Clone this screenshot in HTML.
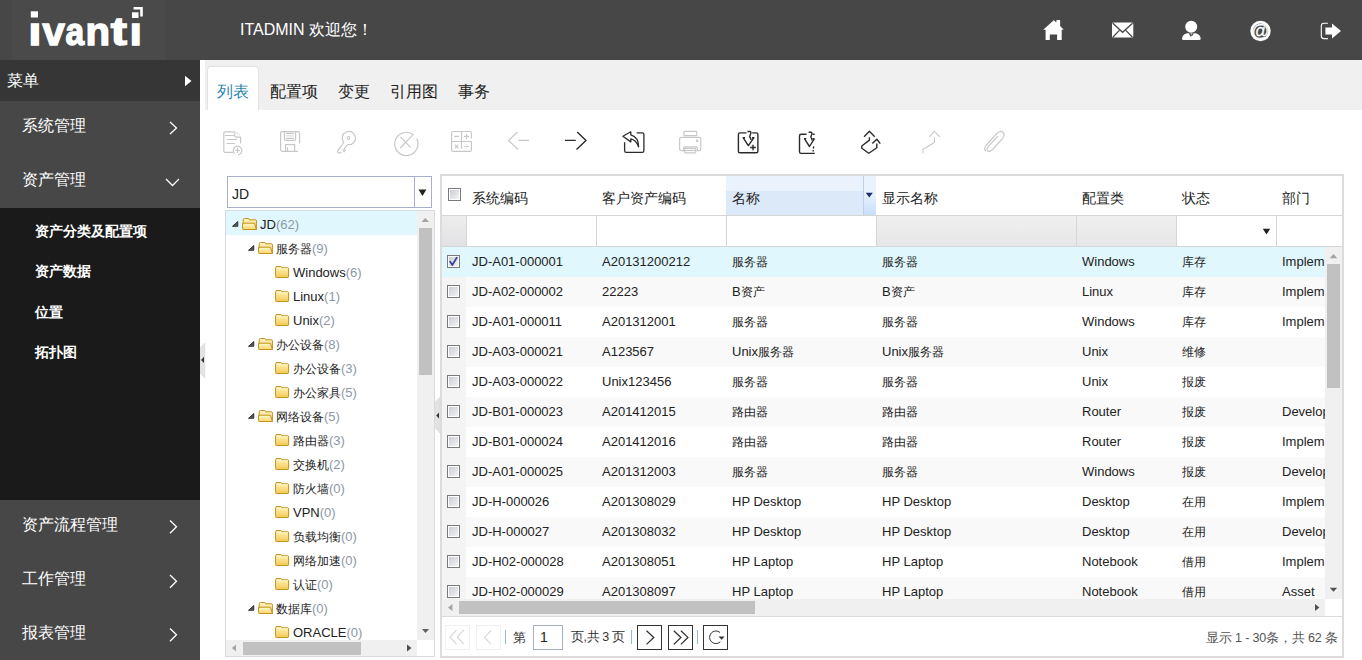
<!DOCTYPE html>
<html><head><meta charset="utf-8">
<style>
*{box-sizing:border-box;margin:0;padding:0}
html,body{width:1362px;height:660px;overflow:hidden;background:#fff;font-family:"Liberation Sans",sans-serif;}
.a{position:absolute;white-space:nowrap}
.mi{color:#fff;font-size:16px}
.si{color:#fff;font-size:14px;font-weight:bold;left:35px}
.tab{font-size:16px;color:#222;top:82px}
.tr{font-size:13px;color:#222;height:24px;line-height:24px}
.tr i{font-style:normal;color:#8d97a5}
.cell{font-size:13px;color:#222;line-height:30px;height:30px;overflow:hidden}
.hd{font-size:14px;color:#222}
.cb{width:13px;height:13px;border:1px solid #7a7a7a;background:linear-gradient(135deg,#c6cad2,#f6f6f8);box-shadow:inset 0 0 0 1px #fff}
.pb{width:25px;height:25px;border:1px solid #333}
</style></head><body>

<div class="a" style="left:0;top:0;width:1362px;height:60px;background:#474747"></div>
<div class="a" style="left:12px;top:0;width:154px;height:60px;background:#494a49"></div>
<svg class="a" style="left:0;top:0" width="200" height="60">
<g fill="#fff" stroke="#fff" stroke-width="1.4" font-family="Liberation Sans" font-weight="bold" font-size="39">
<g transform="translate(28.3,45) scale(1.22,1)"><text x="0" y="0">ı</text></g>
<g transform="translate(42.6,45) scale(1.03,1)"><text x="0" y="0">v</text></g>
<g transform="translate(66.4,45) scale(0.86,1)"><text x="-1" y="0">a</text></g>
<g transform="translate(85.6,45) scale(1.03,1)"><text x="0" y="0">n</text></g>
<g transform="translate(110.8,45) scale(1.25,1)"><text x="0" y="0">t</text></g>
<g transform="translate(129.5,45) scale(1.15,1)"><text x="0" y="0">ı</text></g>
</g>
<g fill="#fff">
<rect x="30.8" y="11.3" width="7.2" height="6.2"/>
<rect x="132" y="12.3" width="6.5" height="5.7"/>
<path d="M133.6 7h9.2v9.4h-2.6v-6.9h-6.6z"/>
</g></svg>
<div class="a" style="left:240px;top:20px;color:#fff;font-size:16px">ITADMIN 欢迎您！</div>
<svg class="a" style="left:1030px;top:10px" width="332" height="40">
<g fill="#fff">
<path d="M13.2 19.8 L23.8 10.3 L26.4 12.6 V9.9 H30.1 V15.9 L33.7 19.8 H31.7 V30.1 H27.1 V24.4 H19.8 V30.1 H15.6 V19.8 Z"/>
<rect x="82" y="12.6" width="21.3" height="14.9" rx="1.5"/>
<circle cx="161.2" cy="16.7" r="6"/>
<path d="M152 29 Q152 24.2 157.2 23.2 H165.5 Q170.7 24.2 170.7 29 Q170.7 30.1 169 30.1 H153.7 Q152 30.1 152 29 Z"/>
<circle cx="230.5" cy="21" r="10.2"/>
<path d="M295.4 17.5 H302 V13.6 L311 21 L302 28.6 V24.5 H295.4 Z"/>
</g>
<g stroke="#474747" stroke-width="1.3" fill="none">
<path d="M82.8 13.2 L92.6 22.3 L102.5 13.2 M83 27 L89.4 20.4 M102.3 27 L95.8 20.4"/>
</g>
<path d="M158.6 23.2 H163.8 L161.2 27.6 Z" fill="#474747"/><path d="M160.4 23.6 H162 L161.2 25 Z M161.2 25.6 L162 26.8 L161.2 28 L160.4 26.8 Z" fill="#fff"/>
<circle cx="230.5" cy="21" r="7.6" fill="#474747"/>
<text x="230.5" y="26.6" font-family="Liberation Sans" font-size="17.5" fill="#fff" stroke="#fff" stroke-width="0.3" text-anchor="middle">@</text>
<path d="M297.9 13.2 H294 Q291.3 13.2 291.3 16 V26 Q291.3 28.6 294 28.6 H297.9" stroke="#fff" stroke-width="1.1" fill="none"/>
</svg>
<div class="a" style="left:0;top:60px;width:200px;height:600px;background:#474747"></div>
<div class="a" style="left:0;top:60px;width:200px;height:41px;background:#363636"></div>
<div class="a mi" style="left:7px;top:71px">菜单</div>
<div class="a mi" style="left:22px;top:116px">系统管理</div>
<div class="a mi" style="left:22px;top:170px">资产管理</div>
<div class="a" style="left:0;top:208px;width:200px;height:292px;background:#1a1a1a"></div>
<div class="a si" style="top:223px">资产分类及配置项</div>
<div class="a si" style="top:263px">资产数据</div>
<div class="a si" style="top:304px">位置</div>
<div class="a si" style="top:344px">拓扑图</div>
<div class="a mi" style="left:22px;top:515px">资产流程管理</div>
<div class="a mi" style="left:22px;top:569px">工作管理</div>
<div class="a mi" style="left:22px;top:623px">报表管理</div>
<svg class="a" style="left:0;top:60px" width="200" height="600">
<path d="M185 15.8 L191.5 21 L185 26.2 Z" fill="#fff"/>
<g stroke="#fff" stroke-width="1.3" fill="none">
<path d="M170 62 L176.5 68 L170 74"/>
<path d="M166 119 L172.5 125.5 L179 119"/>
<path d="M170 460.5 L176.5 466.8 L170 473.3"/>
<path d="M170 515 L176.5 521.3 L170 527.8"/>
<path d="M170 568.5 L176.5 574.8 L170 581.3"/>
</g></svg>
<div class="a" style="left:205px;top:60px;width:1157px;height:50px;background:#f0f0f0"></div>
<div class="a" style="left:207px;top:66px;width:52px;height:44px;background:#fff;border:1px solid #e2e2e2;border-bottom:none;border-radius:4px 4px 0 0"></div>
<div class="a tab" style="left:217px;color:#2a86b0">列表</div>
<div class="a tab" style="left:270px">配置项</div>
<div class="a tab" style="left:338px">变更</div>
<div class="a tab" style="left:390px">引用图</div>
<div class="a tab" style="left:458px">事务</div><svg class="a" style="left:200px;top:110px" width="1162" height="65">
<g transform="translate(-200,-110)" fill="none" stroke-linecap="butt" stroke-linejoin="round">
<!-- doc add -->
<g stroke="#c8c8c8" stroke-width="1.2">
<path d="M234.8 131.8 H225.2 Q223.8 131.8 223.8 133.2 V151 Q223.8 152.4 225.2 152.4 H233.5"/>
<path d="M234.8 131.8 V135.5 Q234.8 137.2 236.5 137.2 H240.6 V143.5"/>
<path d="M236.5 132.2 L239.8 135.5" stroke-dasharray="1 0.6"/>
<path d="M225 135.5 H234.3 M226.8 139.5 H237 M226.8 143.5 H235"/>
<path d="M234.5 153.5 A4.3 4.3 0 1 1 238 154.8"/>
<path d="M237.5 148 V153 M235 150.5 H240"/>
</g>
<!-- floppy -->
<g stroke="#c8c8c8" stroke-width="1.2">
<path d="M299.6 143.5 V133.3 Q299.6 131.6 297.9 131.6 H282.3 Q280.6 131.6 280.6 133.3 V149.6 Q280.6 151.3 282.3 151.3 H298"/>
<path d="M284.5 131.6 V139.2 Q284.5 140.4 285.7 140.4 H294.4 Q295.6 140.4 295.6 139.2 V131.6"/>
<path d="M286 133.4 H294 M286 138.4 H294"/>
<path d="M286 135.9 H294" stroke="#dedede"/>
<path d="M285.5 151.3 V144.6 H294.7 V151.3 M287.5 147.2 V151.3"/>
</g>
<!-- key -->
<g stroke="#c8c8c8" stroke-width="1.2">
<path d="M344 142.5 A6.6 6.6 0 1 1 347.5 144.5"/>
<ellipse cx="348.5" cy="138" rx="1.2" ry="1.5"/>
<path d="M344 142.5 L337.8 150.3 Q336.8 152.3 338.8 153 Q340 153.2 341.5 152.2"/>
<path d="M347.5 144.5 L343.5 149.8 M343.5 149 L345.8 150.8 M342.8 150.4 L344.8 152"/>
</g>
<!-- circle x -->
<g stroke="#c8c8c8" stroke-width="1.2">
<path d="M412.8 134.3 A11.6 11.6 0 1 0 416.6 138.5"/>
<path d="M400.4 136.8 L410.6 147.4 M413.6 134.2 L400.2 148"/>
</g>
<!-- calculator -->
<g stroke="#c8c8c8" stroke-width="1.2">
<path d="M471.4 138.6 V133 Q471.4 131.5 469.9 131.5 H453.1 Q451.6 131.5 451.6 133 V149.9 Q451.6 151.4 453.1 151.4 H469.9 Q471.4 151.4 471.4 149.9 V141.5 H451.6"/>
<path d="M461.5 131.5 V148.8"/>
<path d="M454.2 136.4 H458.9 M464 136.4 H469 M466.5 133.9 V138.9 M454.8 144.7 L458.4 148.3 M458.4 144.7 L454.8 148.3 M464.2 146.5 H469"/>
<path d="M466.5 144.5 v0.5 M466.5 148 v0.5" stroke-width="1.4"/>
</g>
<!-- left arrow -->
<g stroke="#c8c8c8" stroke-width="1.1">
<path d="M517.4 132 L508.6 140.5 L518 149.5 M518.2 140.4 H529"/>
</g>
<!-- right arrow -->
<g stroke="#2b2b2b" stroke-width="1.4">
<path d="M577.2 132.1 L586 140.4 L576.5 149.5 M564.9 140.4 H575.8"/>
</g>
<!-- reply box -->
<g stroke="#2b2b2b" stroke-width="1.3">
<path d="M624.6 142.2 V150.8 Q624.6 152.4 626.2 152.4 H642.3 Q643.9 152.4 643.9 150.8 V134.5 Q643.9 132.9 642.3 132.9 H636.7"/>
<path d="M638.6 146.8 Q638.8 137.3 630.8 134.8 V131.8 L622.9 136.2 L630.8 141.9 V138.9 Q636 139.8 638.6 146.8 Z"/>
</g>
<!-- printer -->
<g stroke="#c8c8c8" stroke-width="1.2">
<rect x="683.8" y="131.4" width="13" height="4.3" rx="0.8"/>
<path d="M684 150.6 H681.2 Q679.6 150.6 679.6 149 V139 Q679.6 137.4 681.2 137.4 H699.2 Q700.8 137.4 700.8 139 V149 Q700.8 150.6 699.2 150.6 H697.4 V148 Q697.4 146.8 696.2 146.8 H684.8 Q683.6 146.8 683.6 148 Z"/>
<rect x="684.6" y="148.4" width="11.2" height="4.4" rx="0.8"/>
<path d="M685 150.5 H695.4"/>
<circle cx="697.1" cy="140.9" r="0.7"/>
</g>
<!-- download + -->
<g stroke="#2b2b2b" stroke-width="1.4">
<path d="M746.5 132.9 H740 Q738.4 132.9 738.4 134.5 V151.2 Q738.4 152.8 740 152.8 H756.3 Q757.9 152.8 757.9 151.2 V134.5 Q757.9 132.9 756.3 132.9 H752.2"/>
<path d="M743.1 137.6 L748.3 145.6 L754 137.6 M742.7 137.8 H745 M752 137.8 H754.4"/>
<path d="M747.5 131.5 H750 Q751.4 131.8 750.6 134 L749.6 136.5 Q751 138.5 751 140"/>
<path d="M750.2 147.5 H755.8 M753 144.8 V150.3"/>
</g>
<!-- download clipped -->
<g stroke="#2b2b2b" stroke-width="1.4">
<path d="M806.5 134.3 H801.2 Q799.5 134.3 799.5 136 V151.7 Q799.5 153.4 801.2 153.4 H814.8"/>
<path d="M812.5 134.3 H814.8"/>
<path d="M804.4 138.6 L809.5 146.5 L814.4 138.6 M804 138.8 H806.2 M812.4 138.8 H814.6"/>
<path d="M808.6 132.2 H811 Q812.5 132.4 811.6 134.6 L810.8 137 Q812 139 812 140.5"/>
<path d="M813.8 146.5 L813.3 148.5 M813.4 150 L812.9 151.5"/>
</g>
<!-- route -->
<g stroke="#2b2b2b" stroke-width="1.4">
<path d="M864.1 136.8 L869.4 131.3 L874.7 136.8"/>
<path d="M869.4 137.2 V140.1 L861.8 146 V148.3 L868.8 153.3 L876.8 147.7 V143.6"/>
<path d="M872.3 143.6 L876.8 139.2 L880.3 143.6"/>
</g>
<!-- step arrow -->
<g stroke="#c8c8c8" stroke-width="1.1">
<path d="M929.3 136.8 L934.4 131.3 L939.9 136.8"/>
<path d="M934.4 137.2 V142.5 L922.9 149.5 V153.6"/>
</g>
<!-- paperclip -->
<g stroke="#c8c8c8" stroke-width="1.2">
<path d="M985.6 151.2 Q983.5 148.8 986 145.5 L996.5 133.8 Q1000.5 129.8 1003.2 132.5 Q1005.5 135.2 1002 139.2 L992.5 149.5 Q989.5 152.5 987.6 150.7 Q986 148.8 988.8 145.8 L997.8 136.2"/>
</g>
</g></svg><div class="a" style="left:227px;top:176px;width:205px;height:32px;border:1px solid #a9afc9;background:#fff"></div>
<div class="a" style="left:414px;top:177px;width:1px;height:30px;background:#a9afc9"></div>
<svg class="a" style="left:418px;top:189px" width="9" height="8"><path d="M0.5 0.6 H8.4 L4.45 7 Z" fill="#222"/></svg>
<div class="a" style="left:232px;top:186px;font-size:14px;color:#222">JD</div>
<div class="a" style="left:225px;top:210px;width:210px;height:447px;border:1px solid #d8dae2;background:#fff"></div>
<div class="a" style="left:226px;top:211px;width:191px;height:24px;background:#e0f8fd"></div>
<div class="a" style="left:417px;top:211px;width:17px;height:429px;background:#f0f0f0"></div>
<div class="a" style="left:419px;top:228px;width:13px;height:147px;background:#c1c1c1"></div>
<svg class="a" style="left:417px;top:211px" width="17" height="429"><path d="M4.5 11 H12 L8.25 7 Z" fill="#a3a3a3"/><path d="M5 418 H12 L8.5 422 Z" fill="#606060"/></svg>
<div class="a" style="left:226px;top:640px;width:191px;height:16px;background:#f0f0f0"></div>
<div class="a" style="left:243px;top:642px;width:118px;height:13px;background:#c1c1c1"></div>
<svg class="a" style="left:226px;top:640px" width="191" height="16"><path d="M10 4.5 V11.5 L6 8 Z" fill="#a3a3a3"/><path d="M181 4.5 V11.5 L185.5 8 Z" fill="#505050"/></svg>
<div class="a tr" style="left:260px;top:213px">JD<i>(62)</i></div>
<div class="a tr" style="left:276px;top:237px"><span style="font-size:12.3px">服务器</span><i>(9)</i></div>
<div class="a tr" style="left:293px;top:261px">Windows<i>(6)</i></div>
<div class="a tr" style="left:293px;top:285px">Linux<i>(1)</i></div>
<div class="a tr" style="left:293px;top:309px">Unix<i>(2)</i></div>
<div class="a tr" style="left:276px;top:333px"><span style="font-size:12.3px">办公设备</span><i>(8)</i></div>
<div class="a tr" style="left:293px;top:357px"><span style="font-size:12.3px">办公设备</span><i>(3)</i></div>
<div class="a tr" style="left:293px;top:381px"><span style="font-size:12.3px">办公家具</span><i>(5)</i></div>
<div class="a tr" style="left:276px;top:405px"><span style="font-size:12.3px">网络设备</span><i>(5)</i></div>
<div class="a tr" style="left:293px;top:429px"><span style="font-size:12.3px">路由器</span><i>(3)</i></div>
<div class="a tr" style="left:293px;top:453px"><span style="font-size:12.3px">交换机</span><i>(2)</i></div>
<div class="a tr" style="left:293px;top:477px"><span style="font-size:12.3px">防火墙</span><i>(0)</i></div>
<div class="a tr" style="left:293px;top:501px">VPN<i>(0)</i></div>
<div class="a tr" style="left:293px;top:525px"><span style="font-size:12.3px">负载均衡</span><i>(0)</i></div>
<div class="a tr" style="left:293px;top:549px"><span style="font-size:12.3px">网络加速</span><i>(0)</i></div>
<div class="a tr" style="left:293px;top:573px"><span style="font-size:12.3px">认证</span><i>(0)</i></div>
<div class="a tr" style="left:276px;top:597px"><span style="font-size:12.3px">数据库</span><i>(0)</i></div>
<div class="a tr" style="left:293px;top:621px">ORACLE<i>(0)</i></div>
<svg class="a" style="left:0;top:0" width="440" height="660"><defs><linearGradient id="fb" x1="0" y1="0" x2="0" y2="1"><stop offset="0" stop-color="#fff7c2"/><stop offset="1" stop-color="#f3d060"/></linearGradient><linearGradient id="ff" x1="0" y1="0" x2="0" y2="1"><stop offset="0" stop-color="#fff9cf"/><stop offset="1" stop-color="#f6d76a"/></linearGradient><linearGradient id="fc" x1="0" y1="0" x2="0" y2="1"><stop offset="0" stop-color="#fff6bc"/><stop offset="1" stop-color="#f1cb52"/></linearGradient></defs><path d="M232.5 226.3 H237.8 V221.5 Z" fill="#555" stroke="#2e2e2e" stroke-width="0.9" stroke-linejoin="round"/><g transform="translate(242,218)">
<path d="M1.2 2.2 Q1.2 0.5 2.6 0.5 H6.2 Q7.3 0.5 7.6 1.8 H13.6 Q14.4 1.8 14.4 2.6 V11.5 H1.2 Z" fill="url(#fb)" stroke="#c3901f" stroke-width="1"/>
<path d="M0.6 5.2 H12.4 L14.4 11.5 H1.6 Q0.6 11.5 0.6 10.5 Z" fill="url(#ff)" stroke="#c3901f" stroke-width="1" stroke-linejoin="round"/>
</g><path d="M248.5 250.3 H253.8 V245.5 Z" fill="#555" stroke="#2e2e2e" stroke-width="0.9" stroke-linejoin="round"/><g transform="translate(258,242)">
<path d="M1.2 2.2 Q1.2 0.5 2.6 0.5 H6.2 Q7.3 0.5 7.6 1.8 H13.6 Q14.4 1.8 14.4 2.6 V11.5 H1.2 Z" fill="url(#fb)" stroke="#c3901f" stroke-width="1"/>
<path d="M0.6 5.2 H12.4 L14.4 11.5 H1.6 Q0.6 11.5 0.6 10.5 Z" fill="url(#ff)" stroke="#c3901f" stroke-width="1" stroke-linejoin="round"/>
</g><g transform="translate(275,266)">
<path d="M0.6 1.8 Q0.6 0.5 1.9 0.5 H5.5 Q6.6 0.5 6.9 1.8 H12.8 Q13.6 1.8 13.6 2.6 V10.7 Q13.6 11.5 12.8 11.5 H1.4 Q0.6 11.5 0.6 10.7 Z" fill="url(#fc)" stroke="#c3901f" stroke-width="1"/>
<path d="M1.2 2.8 H13" stroke="#fff8d0" stroke-width="0.8"/>
</g><g transform="translate(275,290)">
<path d="M0.6 1.8 Q0.6 0.5 1.9 0.5 H5.5 Q6.6 0.5 6.9 1.8 H12.8 Q13.6 1.8 13.6 2.6 V10.7 Q13.6 11.5 12.8 11.5 H1.4 Q0.6 11.5 0.6 10.7 Z" fill="url(#fc)" stroke="#c3901f" stroke-width="1"/>
<path d="M1.2 2.8 H13" stroke="#fff8d0" stroke-width="0.8"/>
</g><g transform="translate(275,314)">
<path d="M0.6 1.8 Q0.6 0.5 1.9 0.5 H5.5 Q6.6 0.5 6.9 1.8 H12.8 Q13.6 1.8 13.6 2.6 V10.7 Q13.6 11.5 12.8 11.5 H1.4 Q0.6 11.5 0.6 10.7 Z" fill="url(#fc)" stroke="#c3901f" stroke-width="1"/>
<path d="M1.2 2.8 H13" stroke="#fff8d0" stroke-width="0.8"/>
</g><path d="M248.5 346.3 H253.8 V341.5 Z" fill="#555" stroke="#2e2e2e" stroke-width="0.9" stroke-linejoin="round"/><g transform="translate(258,338)">
<path d="M1.2 2.2 Q1.2 0.5 2.6 0.5 H6.2 Q7.3 0.5 7.6 1.8 H13.6 Q14.4 1.8 14.4 2.6 V11.5 H1.2 Z" fill="url(#fb)" stroke="#c3901f" stroke-width="1"/>
<path d="M0.6 5.2 H12.4 L14.4 11.5 H1.6 Q0.6 11.5 0.6 10.5 Z" fill="url(#ff)" stroke="#c3901f" stroke-width="1" stroke-linejoin="round"/>
</g><g transform="translate(275,362)">
<path d="M0.6 1.8 Q0.6 0.5 1.9 0.5 H5.5 Q6.6 0.5 6.9 1.8 H12.8 Q13.6 1.8 13.6 2.6 V10.7 Q13.6 11.5 12.8 11.5 H1.4 Q0.6 11.5 0.6 10.7 Z" fill="url(#fc)" stroke="#c3901f" stroke-width="1"/>
<path d="M1.2 2.8 H13" stroke="#fff8d0" stroke-width="0.8"/>
</g><g transform="translate(275,386)">
<path d="M0.6 1.8 Q0.6 0.5 1.9 0.5 H5.5 Q6.6 0.5 6.9 1.8 H12.8 Q13.6 1.8 13.6 2.6 V10.7 Q13.6 11.5 12.8 11.5 H1.4 Q0.6 11.5 0.6 10.7 Z" fill="url(#fc)" stroke="#c3901f" stroke-width="1"/>
<path d="M1.2 2.8 H13" stroke="#fff8d0" stroke-width="0.8"/>
</g><path d="M248.5 418.3 H253.8 V413.5 Z" fill="#555" stroke="#2e2e2e" stroke-width="0.9" stroke-linejoin="round"/><g transform="translate(258,410)">
<path d="M1.2 2.2 Q1.2 0.5 2.6 0.5 H6.2 Q7.3 0.5 7.6 1.8 H13.6 Q14.4 1.8 14.4 2.6 V11.5 H1.2 Z" fill="url(#fb)" stroke="#c3901f" stroke-width="1"/>
<path d="M0.6 5.2 H12.4 L14.4 11.5 H1.6 Q0.6 11.5 0.6 10.5 Z" fill="url(#ff)" stroke="#c3901f" stroke-width="1" stroke-linejoin="round"/>
</g><g transform="translate(275,434)">
<path d="M0.6 1.8 Q0.6 0.5 1.9 0.5 H5.5 Q6.6 0.5 6.9 1.8 H12.8 Q13.6 1.8 13.6 2.6 V10.7 Q13.6 11.5 12.8 11.5 H1.4 Q0.6 11.5 0.6 10.7 Z" fill="url(#fc)" stroke="#c3901f" stroke-width="1"/>
<path d="M1.2 2.8 H13" stroke="#fff8d0" stroke-width="0.8"/>
</g><g transform="translate(275,458)">
<path d="M0.6 1.8 Q0.6 0.5 1.9 0.5 H5.5 Q6.6 0.5 6.9 1.8 H12.8 Q13.6 1.8 13.6 2.6 V10.7 Q13.6 11.5 12.8 11.5 H1.4 Q0.6 11.5 0.6 10.7 Z" fill="url(#fc)" stroke="#c3901f" stroke-width="1"/>
<path d="M1.2 2.8 H13" stroke="#fff8d0" stroke-width="0.8"/>
</g><g transform="translate(275,482)">
<path d="M0.6 1.8 Q0.6 0.5 1.9 0.5 H5.5 Q6.6 0.5 6.9 1.8 H12.8 Q13.6 1.8 13.6 2.6 V10.7 Q13.6 11.5 12.8 11.5 H1.4 Q0.6 11.5 0.6 10.7 Z" fill="url(#fc)" stroke="#c3901f" stroke-width="1"/>
<path d="M1.2 2.8 H13" stroke="#fff8d0" stroke-width="0.8"/>
</g><g transform="translate(275,506)">
<path d="M0.6 1.8 Q0.6 0.5 1.9 0.5 H5.5 Q6.6 0.5 6.9 1.8 H12.8 Q13.6 1.8 13.6 2.6 V10.7 Q13.6 11.5 12.8 11.5 H1.4 Q0.6 11.5 0.6 10.7 Z" fill="url(#fc)" stroke="#c3901f" stroke-width="1"/>
<path d="M1.2 2.8 H13" stroke="#fff8d0" stroke-width="0.8"/>
</g><g transform="translate(275,530)">
<path d="M0.6 1.8 Q0.6 0.5 1.9 0.5 H5.5 Q6.6 0.5 6.9 1.8 H12.8 Q13.6 1.8 13.6 2.6 V10.7 Q13.6 11.5 12.8 11.5 H1.4 Q0.6 11.5 0.6 10.7 Z" fill="url(#fc)" stroke="#c3901f" stroke-width="1"/>
<path d="M1.2 2.8 H13" stroke="#fff8d0" stroke-width="0.8"/>
</g><g transform="translate(275,554)">
<path d="M0.6 1.8 Q0.6 0.5 1.9 0.5 H5.5 Q6.6 0.5 6.9 1.8 H12.8 Q13.6 1.8 13.6 2.6 V10.7 Q13.6 11.5 12.8 11.5 H1.4 Q0.6 11.5 0.6 10.7 Z" fill="url(#fc)" stroke="#c3901f" stroke-width="1"/>
<path d="M1.2 2.8 H13" stroke="#fff8d0" stroke-width="0.8"/>
</g><g transform="translate(275,578)">
<path d="M0.6 1.8 Q0.6 0.5 1.9 0.5 H5.5 Q6.6 0.5 6.9 1.8 H12.8 Q13.6 1.8 13.6 2.6 V10.7 Q13.6 11.5 12.8 11.5 H1.4 Q0.6 11.5 0.6 10.7 Z" fill="url(#fc)" stroke="#c3901f" stroke-width="1"/>
<path d="M1.2 2.8 H13" stroke="#fff8d0" stroke-width="0.8"/>
</g><path d="M248.5 610.3 H253.8 V605.5 Z" fill="#555" stroke="#2e2e2e" stroke-width="0.9" stroke-linejoin="round"/><g transform="translate(258,602)">
<path d="M1.2 2.2 Q1.2 0.5 2.6 0.5 H6.2 Q7.3 0.5 7.6 1.8 H13.6 Q14.4 1.8 14.4 2.6 V11.5 H1.2 Z" fill="url(#fb)" stroke="#c3901f" stroke-width="1"/>
<path d="M0.6 5.2 H12.4 L14.4 11.5 H1.6 Q0.6 11.5 0.6 10.5 Z" fill="url(#ff)" stroke="#c3901f" stroke-width="1" stroke-linejoin="round"/>
</g><g transform="translate(275,626)">
<path d="M0.6 1.8 Q0.6 0.5 1.9 0.5 H5.5 Q6.6 0.5 6.9 1.8 H12.8 Q13.6 1.8 13.6 2.6 V10.7 Q13.6 11.5 12.8 11.5 H1.4 Q0.6 11.5 0.6 10.7 Z" fill="url(#fc)" stroke="#c3901f" stroke-width="1"/>
<path d="M1.2 2.8 H13" stroke="#fff8d0" stroke-width="0.8"/>
</g></svg>
<svg class="a" style="left:200px;top:343px" width="6" height="35"><path d="M0.3 4.5 V30.5 L4.8 35 V0 Z" fill="#e3e3e3" stroke="#d0d0d0" stroke-width="0.5"/><path d="M4 13.8 V20 L1 16.9 Z" fill="#333"/></svg>
<svg class="a" style="left:435px;top:397px" width="6" height="36"><path d="M0.3 5 V31 L5 36 V0 Z" fill="#e3e3e3" stroke="#d0d0d0" stroke-width="0.5"/><path d="M4 15.5 V21.5 L1.2 18.5 Z" fill="#333"/></svg><div class="a" style="left:440px;top:174px;width:904px;height:484px;border:2px solid #dcdcdc;background:#fff"></div>
<div class="a" style="left:726px;top:176px;width:137px;height:15px;background:#eaf3fd"></div>
<div class="a" style="left:726px;top:191px;width:137px;height:24px;background:#dce9f9"></div>
<div class="a" style="left:863px;top:176px;width:13px;height:39px;background:linear-gradient(#eaf3fd,#eaf3fd 40%,#c8defa);border-left:1px solid #bcd0e8"></div>
<svg class="a" style="left:865px;top:192px" width="9" height="7"><path d="M0.8 0.7 H7.8 L4.3 5.6 Z" fill="#1c2f6c"/></svg>
<div class="a" style="left:442px;top:215px;width:900px;height:1px;background:#d6d6d6"></div>
<div class="a hd" style="left:472px;top:190px">系统编码</div>
<div class="a hd" style="left:602px;top:190px">客户资产编码</div>
<div class="a hd" style="left:732px;top:190px">名称</div>
<div class="a hd" style="left:882px;top:190px">显示名称</div>
<div class="a hd" style="left:1082px;top:190px">配置类</div>
<div class="a hd" style="left:1182px;top:190px">状态</div>
<div class="a hd" style="left:1282px;top:190px">部门</div>
<div class="a" style="left:442px;top:216px;width:24px;height:30px;background:linear-gradient(#ededed,#e2e2e4)"></div>
<div class="a" style="left:877px;top:216px;width:299px;height:30px;background:linear-gradient(#f0f0f0,#e6e6e8)"></div>
<div class="a" style="left:466px;top:216px;width:1px;height:30px;background:#d6d6d6"></div>
<div class="a" style="left:596px;top:216px;width:1px;height:30px;background:#d6d6d6"></div>
<div class="a" style="left:726px;top:216px;width:1px;height:30px;background:#d6d6d6"></div>
<div class="a" style="left:876px;top:216px;width:1px;height:30px;background:#d6d6d6"></div>
<div class="a" style="left:1076px;top:216px;width:1px;height:30px;background:#d6d6d6"></div>
<div class="a" style="left:1176px;top:216px;width:1px;height:30px;background:#d6d6d6"></div>
<div class="a" style="left:1276px;top:216px;width:1px;height:30px;background:#d6d6d6"></div>
<div class="a" style="left:442px;top:246px;width:900px;height:1px;background:#d6d6d6"></div>
<svg class="a" style="left:1262px;top:228px" width="9" height="8"><path d="M0.8 0.8 H8.2 L4.5 6.6 Z" fill="#222"/></svg>
<div class="a" style="left:442px;top:247px;width:883px;height:352px;overflow:hidden">
<div class="a" style="left:0;top:0px;width:883px;height:30px;background:#e0f8fd"></div>
<div class="a cb" style="left:5px;top:8px"></div>
<svg class="a" style="left:6px;top:9px" width="11" height="11"><path d="M2.2 5.6 L4.3 9 L8.8 1.6" stroke="#34479a" stroke-width="1.8" fill="none" stroke-linecap="round" stroke-linejoin="round"/></svg>
<div class="a cell" style="left:30px;top:0px;width:124px">JD-A01-000001</div>
<div class="a cell" style="left:160px;top:0px;width:124px">A20131200212</div>
<div class="a cell" style="left:290px;top:0px;width:144px"><span style="font-size:12.2px">服务器</span></div>
<div class="a cell" style="left:440px;top:0px;width:194px"><span style="font-size:12.2px">服务器</span></div>
<div class="a cell" style="left:640px;top:0px;width:94px">Windows</div>
<div class="a cell" style="left:740px;top:0px;width:94px"><span style="font-size:12.2px">库存</span></div>
<div class="a cell" style="left:840px;top:0px;width:43px">Implem</div>
<div class="a" style="left:0;top:30px;width:883px;height:30px;background:#f9f9f9"></div>
<div class="a" style="left:0;top:30px;width:24px;height:30px;background:#f4f4f4"></div>
<div class="a cb" style="left:5px;top:38px"></div>
<div class="a cell" style="left:30px;top:30px;width:124px">JD-A02-000002</div>
<div class="a cell" style="left:160px;top:30px;width:124px">22223</div>
<div class="a cell" style="left:290px;top:30px;width:144px">B<span style="font-size:12.2px">资产</span></div>
<div class="a cell" style="left:440px;top:30px;width:194px">B<span style="font-size:12.2px">资产</span></div>
<div class="a cell" style="left:640px;top:30px;width:94px">Linux</div>
<div class="a cell" style="left:740px;top:30px;width:94px"><span style="font-size:12.2px">库存</span></div>
<div class="a cell" style="left:840px;top:30px;width:43px">Implem</div>
<div class="a" style="left:0;top:60px;width:883px;height:30px;background:#fff"></div>
<div class="a" style="left:0;top:60px;width:24px;height:30px;background:#f4f4f4"></div>
<div class="a cb" style="left:5px;top:68px"></div>
<div class="a cell" style="left:30px;top:60px;width:124px">JD-A01-000011</div>
<div class="a cell" style="left:160px;top:60px;width:124px">A201312001</div>
<div class="a cell" style="left:290px;top:60px;width:144px"><span style="font-size:12.2px">服务器</span></div>
<div class="a cell" style="left:440px;top:60px;width:194px"><span style="font-size:12.2px">服务器</span></div>
<div class="a cell" style="left:640px;top:60px;width:94px">Windows</div>
<div class="a cell" style="left:740px;top:60px;width:94px"><span style="font-size:12.2px">库存</span></div>
<div class="a cell" style="left:840px;top:60px;width:43px">Implem</div>
<div class="a" style="left:0;top:90px;width:883px;height:30px;background:#f9f9f9"></div>
<div class="a" style="left:0;top:90px;width:24px;height:30px;background:#f4f4f4"></div>
<div class="a cb" style="left:5px;top:98px"></div>
<div class="a cell" style="left:30px;top:90px;width:124px">JD-A03-000021</div>
<div class="a cell" style="left:160px;top:90px;width:124px">A123567</div>
<div class="a cell" style="left:290px;top:90px;width:144px">Unix<span style="font-size:12.2px">服务器</span></div>
<div class="a cell" style="left:440px;top:90px;width:194px">Unix<span style="font-size:12.2px">服务器</span></div>
<div class="a cell" style="left:640px;top:90px;width:94px">Unix</div>
<div class="a cell" style="left:740px;top:90px;width:94px"><span style="font-size:12.2px">维修</span></div>
<div class="a cell" style="left:840px;top:90px;width:43px"></div>
<div class="a" style="left:0;top:120px;width:883px;height:30px;background:#fff"></div>
<div class="a" style="left:0;top:120px;width:24px;height:30px;background:#f4f4f4"></div>
<div class="a cb" style="left:5px;top:128px"></div>
<div class="a cell" style="left:30px;top:120px;width:124px">JD-A03-000022</div>
<div class="a cell" style="left:160px;top:120px;width:124px">Unix123456</div>
<div class="a cell" style="left:290px;top:120px;width:144px"><span style="font-size:12.2px">服务器</span></div>
<div class="a cell" style="left:440px;top:120px;width:194px"><span style="font-size:12.2px">服务器</span></div>
<div class="a cell" style="left:640px;top:120px;width:94px">Unix</div>
<div class="a cell" style="left:740px;top:120px;width:94px"><span style="font-size:12.2px">报废</span></div>
<div class="a cell" style="left:840px;top:120px;width:43px"></div>
<div class="a" style="left:0;top:150px;width:883px;height:30px;background:#f9f9f9"></div>
<div class="a" style="left:0;top:150px;width:24px;height:30px;background:#f4f4f4"></div>
<div class="a cb" style="left:5px;top:158px"></div>
<div class="a cell" style="left:30px;top:150px;width:124px">JD-B01-000023</div>
<div class="a cell" style="left:160px;top:150px;width:124px">A201412015</div>
<div class="a cell" style="left:290px;top:150px;width:144px"><span style="font-size:12.2px">路由器</span></div>
<div class="a cell" style="left:440px;top:150px;width:194px"><span style="font-size:12.2px">路由器</span></div>
<div class="a cell" style="left:640px;top:150px;width:94px">Router</div>
<div class="a cell" style="left:740px;top:150px;width:94px"><span style="font-size:12.2px">报废</span></div>
<div class="a cell" style="left:840px;top:150px;width:43px">Develop</div>
<div class="a" style="left:0;top:180px;width:883px;height:30px;background:#fff"></div>
<div class="a" style="left:0;top:180px;width:24px;height:30px;background:#f4f4f4"></div>
<div class="a cb" style="left:5px;top:188px"></div>
<div class="a cell" style="left:30px;top:180px;width:124px">JD-B01-000024</div>
<div class="a cell" style="left:160px;top:180px;width:124px">A201412016</div>
<div class="a cell" style="left:290px;top:180px;width:144px"><span style="font-size:12.2px">路由器</span></div>
<div class="a cell" style="left:440px;top:180px;width:194px"><span style="font-size:12.2px">路由器</span></div>
<div class="a cell" style="left:640px;top:180px;width:94px">Router</div>
<div class="a cell" style="left:740px;top:180px;width:94px"><span style="font-size:12.2px">报废</span></div>
<div class="a cell" style="left:840px;top:180px;width:43px">Implem</div>
<div class="a" style="left:0;top:210px;width:883px;height:30px;background:#f9f9f9"></div>
<div class="a" style="left:0;top:210px;width:24px;height:30px;background:#f4f4f4"></div>
<div class="a cb" style="left:5px;top:218px"></div>
<div class="a cell" style="left:30px;top:210px;width:124px">JD-A01-000025</div>
<div class="a cell" style="left:160px;top:210px;width:124px">A201312003</div>
<div class="a cell" style="left:290px;top:210px;width:144px"><span style="font-size:12.2px">服务器</span></div>
<div class="a cell" style="left:440px;top:210px;width:194px"><span style="font-size:12.2px">服务器</span></div>
<div class="a cell" style="left:640px;top:210px;width:94px">Windows</div>
<div class="a cell" style="left:740px;top:210px;width:94px"><span style="font-size:12.2px">报废</span></div>
<div class="a cell" style="left:840px;top:210px;width:43px">Develop</div>
<div class="a" style="left:0;top:240px;width:883px;height:30px;background:#fff"></div>
<div class="a" style="left:0;top:240px;width:24px;height:30px;background:#f4f4f4"></div>
<div class="a cb" style="left:5px;top:248px"></div>
<div class="a cell" style="left:30px;top:240px;width:124px">JD-H-000026</div>
<div class="a cell" style="left:160px;top:240px;width:124px">A201308029</div>
<div class="a cell" style="left:290px;top:240px;width:144px">HP Desktop</div>
<div class="a cell" style="left:440px;top:240px;width:194px">HP Desktop</div>
<div class="a cell" style="left:640px;top:240px;width:94px">Desktop</div>
<div class="a cell" style="left:740px;top:240px;width:94px"><span style="font-size:12.2px">在用</span></div>
<div class="a cell" style="left:840px;top:240px;width:43px">Implem</div>
<div class="a" style="left:0;top:270px;width:883px;height:30px;background:#f9f9f9"></div>
<div class="a" style="left:0;top:270px;width:24px;height:30px;background:#f4f4f4"></div>
<div class="a cb" style="left:5px;top:278px"></div>
<div class="a cell" style="left:30px;top:270px;width:124px">JD-H-000027</div>
<div class="a cell" style="left:160px;top:270px;width:124px">A201308032</div>
<div class="a cell" style="left:290px;top:270px;width:144px">HP Desktop</div>
<div class="a cell" style="left:440px;top:270px;width:194px">HP Desktop</div>
<div class="a cell" style="left:640px;top:270px;width:94px">Desktop</div>
<div class="a cell" style="left:740px;top:270px;width:94px"><span style="font-size:12.2px">在用</span></div>
<div class="a cell" style="left:840px;top:270px;width:43px">Develop</div>
<div class="a" style="left:0;top:300px;width:883px;height:30px;background:#fff"></div>
<div class="a" style="left:0;top:300px;width:24px;height:30px;background:#f4f4f4"></div>
<div class="a cb" style="left:5px;top:308px"></div>
<div class="a cell" style="left:30px;top:300px;width:124px">JD-H02-000028</div>
<div class="a cell" style="left:160px;top:300px;width:124px">A201308051</div>
<div class="a cell" style="left:290px;top:300px;width:144px">HP Laptop</div>
<div class="a cell" style="left:440px;top:300px;width:194px">HP Laptop</div>
<div class="a cell" style="left:640px;top:300px;width:94px">Notebook</div>
<div class="a cell" style="left:740px;top:300px;width:94px"><span style="font-size:12.2px">借用</span></div>
<div class="a cell" style="left:840px;top:300px;width:43px">Implem</div>
<div class="a" style="left:0;top:330px;width:883px;height:30px;background:#f9f9f9"></div>
<div class="a" style="left:0;top:330px;width:24px;height:30px;background:#f4f4f4"></div>
<div class="a cb" style="left:5px;top:338px"></div>
<div class="a cell" style="left:30px;top:330px;width:124px">JD-H02-000029</div>
<div class="a cell" style="left:160px;top:330px;width:124px">A201308097</div>
<div class="a cell" style="left:290px;top:330px;width:144px">HP Laptop</div>
<div class="a cell" style="left:440px;top:330px;width:194px">HP Laptop</div>
<div class="a cell" style="left:640px;top:330px;width:94px">Notebook</div>
<div class="a cell" style="left:740px;top:330px;width:94px"><span style="font-size:12.2px">借用</span></div>
<div class="a cell" style="left:840px;top:330px;width:43px">Asset</div>
</div>
<div class="a cb" style="left:448px;top:188px"></div>
<div class="a" style="left:1325px;top:247px;width:17px;height:352px;background:#f0f0f0"></div>
<div class="a" style="left:1327px;top:264px;width:13px;height:124px;background:#c1c1c1"></div>
<svg class="a" style="left:1325px;top:247px" width="17" height="352"><path d="M4.8 11.2 H12.2 L8.5 7 Z" fill="#a3a3a3"/><path d="M4.8 340.8 H12.2 L8.5 344.8 Z" fill="#505050"/></svg>
<div class="a" style="left:442px;top:599px;width:883px;height:17px;background:#f0f0f0"></div>
<div class="a" style="left:459px;top:601px;width:296px;height:13px;background:#c1c1c1"></div>
<svg class="a" style="left:442px;top:599px" width="883" height="17"><path d="M10.4 5 V12 L6 8.5 Z" fill="#a3a3a3"/><path d="M873 5 V12 L877.4 8.5 Z" fill="#505050"/></svg>
<div class="a" style="left:442px;top:616px;width:900px;height:1px;background:#dcdcdc"></div>
<div class="a pb" style="left:445px;top:625px;border-color:#f0f0f0"></div>
<div class="a pb" style="left:476px;top:625px;border-color:#f0f0f0"></div>
<div class="a" style="left:505px;top:630px;width:1px;height:14px;background:#8cb8ea"></div>
<div class="a" style="left:631px;top:630px;width:1px;height:14px;background:#8cb8ea"></div>
<div class="a" style="left:697px;top:630px;width:1px;height:14px;background:#8cb8ea"></div>
<div class="a" style="left:513px;top:629px;font-size:13px;color:#333">第</div>
<div class="a" style="left:533px;top:625px;width:30px;height:25px;border:1px solid #a9afc9;background:#fff"></div>
<div class="a" style="left:540px;top:629px;font-size:14px;color:#222">1</div>
<div class="a" style="left:571px;top:629px;font-size:12.5px;letter-spacing:-0.4px;color:#333">页,共 3 页</div>
<div class="a pb" style="left:637px;top:625px;border:1.5px solid #333"></div>
<div class="a pb" style="left:668px;top:625px;border:1.5px solid #333"></div>
<div class="a pb" style="left:703px;top:625px;border:1.5px solid #333"></div>
<svg class="a" style="left:440px;top:617px" width="300" height="40">
<g fill="none" stroke-width="1.1">
<path d="M16.5 13 L10 20.2 L16.5 27.2 M23.8 13 L17.3 20.2 L23.8 27.2" stroke="#d8d8d8" stroke-width="1.2"/>
<path d="M51 13.5 L44.5 20.4 L51 27.2" stroke="#d8d8d8" stroke-width="1.2"/>
</g>
<g fill="none" stroke="#333" stroke-width="1.3">
<path d="M206.5 13.8 L213.8 20.4 L206.5 27.4"/>
<path d="M233.8 13.8 L240.9 20.4 L233.8 27.4 M240.9 13.8 L247.9 20.4 L240.9 27.4"/>
<path d="M280 15.5 A6.3 6.3 0 1 0 280.3 24.8" stroke-width="1"/>
</g>
<path d="M278.5 19.6 H284.6 L281.6 22.8 Z" fill="#333"/>
</svg>
<div class="a" style="left:1206px;top:630px;font-size:12.5px;letter-spacing:-0.15px;color:#555">显示 1 - 30条，共 62 条</div>
</body></html>
